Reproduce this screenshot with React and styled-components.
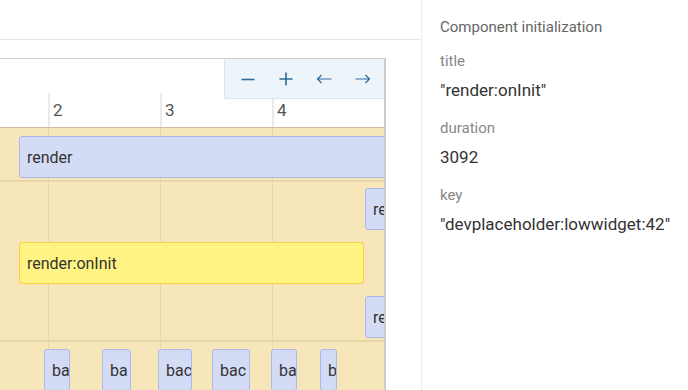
import React from "react"
import styled, { createGlobalStyle } from "styled-components"

const GlobalStyle = createGlobalStyle`
  html, body {
    margin: 0;
    padding: 0;
    background: #fff;
    font-family: Roboto, "Liberation Sans", Arial, sans-serif;
  }
`

const STEP = 112
const ORIGIN = 48 - 2 * STEP // x position of tick "0"
const TICKS = [2, 3, 4]
const LANE = 54

const rows = [
  {
    height: 52,
    offset: 8,
    bars: [{ label: "render", lane: 0, x: 19, w: 400 }],
  },
  {
    height: 158,
    offset: 6,
    bars: [
      { label: "re", lane: 0, x: 365, w: 40 },
      { label: "render:onInit", lane: 1, x: 19, w: 345, active: true },
      { label: "re", lane: 2, x: 365, w: 40 },
    ],
  },
  {
    height: 60,
    offset: 7,
    bars: [
      { label: "ba", lane: 0, x: 44, w: 26 },
      { label: "ba", lane: 0, x: 102, w: 29 },
      { label: "bac", lane: 0, x: 158, w: 34 },
      { label: "bac", lane: 0, x: 212, w: 38 },
      { label: "ba", lane: 0, x: 271, w: 26 },
      { label: "b", lane: 0, x: 320, w: 17 },
    ],
  },
]

const details = [
  { name: "title", value: '"render:onInit"' },
  { name: "duration", value: "3092" },
  { name: "key", value: '"devplaceholder:lowwidget:42"' },
]

const App = () => {
  return (
    <>
      <GlobalStyle />
      <Layout>
        <Main>
          <Header />
          <Timeline>
            <Toolbar>
              <ToolButton aria-label="zoom out">
                <svg width="16" height="16" viewBox="0 0 16 16">
                  <path d="M1.5 8.5h13" stroke="currentColor" strokeWidth="1.6" />
                </svg>
              </ToolButton>
              <ToolButton aria-label="zoom in">
                <svg width="16" height="16" viewBox="0 0 16 16">
                  <path d="M1.5 8h13M8 1.5v13" stroke="currentColor" strokeWidth="1.6" />
                </svg>
              </ToolButton>
              <ToolButton aria-label="back">
                <svg width="17" height="16" viewBox="0 0 17 16" fill="none">
                  <path d="M1.5 8h14M5.5 4L1.5 8l4 4" stroke="currentColor" strokeWidth="1.2" />
                </svg>
              </ToolButton>
              <ToolButton aria-label="forward">
                <svg width="17" height="16" viewBox="0 0 17 16" fill="none">
                  <path d="M1.5 8h14M11.5 4l4 4-4 4" stroke="currentColor" strokeWidth="1.2" />
                </svg>
              </ToolButton>
            </Toolbar>
            <Ruler>
              {TICKS.map((t) => (
                <Tick key={t} style={{ left: ORIGIN + t * STEP }}>
                  {t}
                </Tick>
              ))}
            </Ruler>
            <Track>
              {TICKS.map((t) => (
                <GridLine key={t} style={{ left: ORIGIN + t * STEP }} />
              ))}
              {rows.map((row, i) => (
                <Row key={i} style={{ height: row.height }}>
                  {row.bars.map((b, j) => (
                    <Bar
                      key={j}
                      $active={b.active}
                      style={{ left: b.x, width: b.w, top: row.offset + b.lane * LANE }}
                    >
                      {b.label}
                    </Bar>
                  ))}
                </Row>
              ))}
            </Track>
          </Timeline>
        </Main>
        <Side>
          <Heading>Component initialization</Heading>
          {details.map((d) => (
            <Field key={d.name}>
              <FieldName>{d.name}</FieldName>
              <FieldValue>{d.value}</FieldValue>
            </Field>
          ))}
        </Side>
      </Layout>
    </>
  )
}

const Layout = styled.div`
  display: flex;
  width: 688px;
  height: 390px;
  overflow: hidden;
`

const Main = styled.div`
  width: 421px;
  flex-shrink: 0;
  border-right: 1px solid #ececec;
  display: flex;
  flex-direction: column;
  gap: 18px;
`

const Header = styled.div`
  height: 39px;
  flex-shrink: 0;
  border-bottom: 1px solid #e6e6e6;
`

const Timeline = styled.div`
  position: relative;
  width: 384px;
  flex: 1;
  border-top: 1px solid #cfcfcf;
  border-right: 2px solid #cccccc;
  display: flex;
  flex-direction: column;
  overflow: hidden;
`

const Toolbar = styled.div`
  position: absolute;
  top: 0;
  right: 0;
  z-index: 2;
  width: 160px;
  height: 40px;
  box-sizing: border-box;
  background: #eef5fa;
  border-left: 1px solid #dbe5ee;
  border-bottom: 1px solid #dbe5ee;
  display: flex;
  align-items: center;
  justify-content: space-around;
  padding: 0 2px 0 4px;
`

const ToolButton = styled.button`
  border: 0;
  background: none;
  padding: 0;
  width: 24px;
  height: 24px;
  display: grid;
  place-items: center;
  color: #2d6b9b;
  cursor: pointer;
`

const Ruler = styled.div`
  position: relative;
  height: 68px;
  flex-shrink: 0;
  background: #fff;
  border-bottom: 1px solid #cdbf9c;
`

const Tick = styled.div`
  position: absolute;
  top: 34px;
  bottom: 0;
  border-left: 2px solid #ebebeb;
  padding: 7px 0 0 3px;
  font-size: 17px;
  color: #555;
`

const Track = styled.div`
  position: relative;
  flex: 1;
  background: #f6e6ba;
`

const GridLine = styled.div`
  position: absolute;
  top: 0;
  bottom: 0;
  width: 1px;
  background: #ead7a6;
`

const Row = styled.div`
  position: relative;
  border-bottom: 2px solid #e9d6a8;
`

const Bar = styled.div`
  position: absolute;
  height: 42px;
  box-sizing: border-box;
  padding-left: 7px;
  display: flex;
  align-items: center;
  overflow: hidden;
  white-space: nowrap;
  font-size: 16px;
  color: #333;
  border-radius: 3px;
  background: ${(p) => (p.$active ? "#fff383" : "#d4dcf5")};
  border: 1.5px solid ${(p) => (p.$active ? "#f8d23f" : "#a9b9ef")};
`

const Side = styled.div`
  flex: 1;
  padding: 18px 0 0 18px;
  display: flex;
  flex-direction: column;
`

const Heading = styled.div`
  font-size: 15px;
  color: #666;
  line-height: 18px;
  margin-bottom: 15px;
`

const Field = styled.div`
  display: flex;
  flex-direction: column;
  gap: 9px;
  margin-bottom: 18px;
`

const FieldName = styled.div`
  font-size: 15px;
  line-height: 20px;
  color: #888;
`

const FieldValue = styled.div`
  font-size: 17px;
  line-height: 20px;
  color: #333;
`

export default App
